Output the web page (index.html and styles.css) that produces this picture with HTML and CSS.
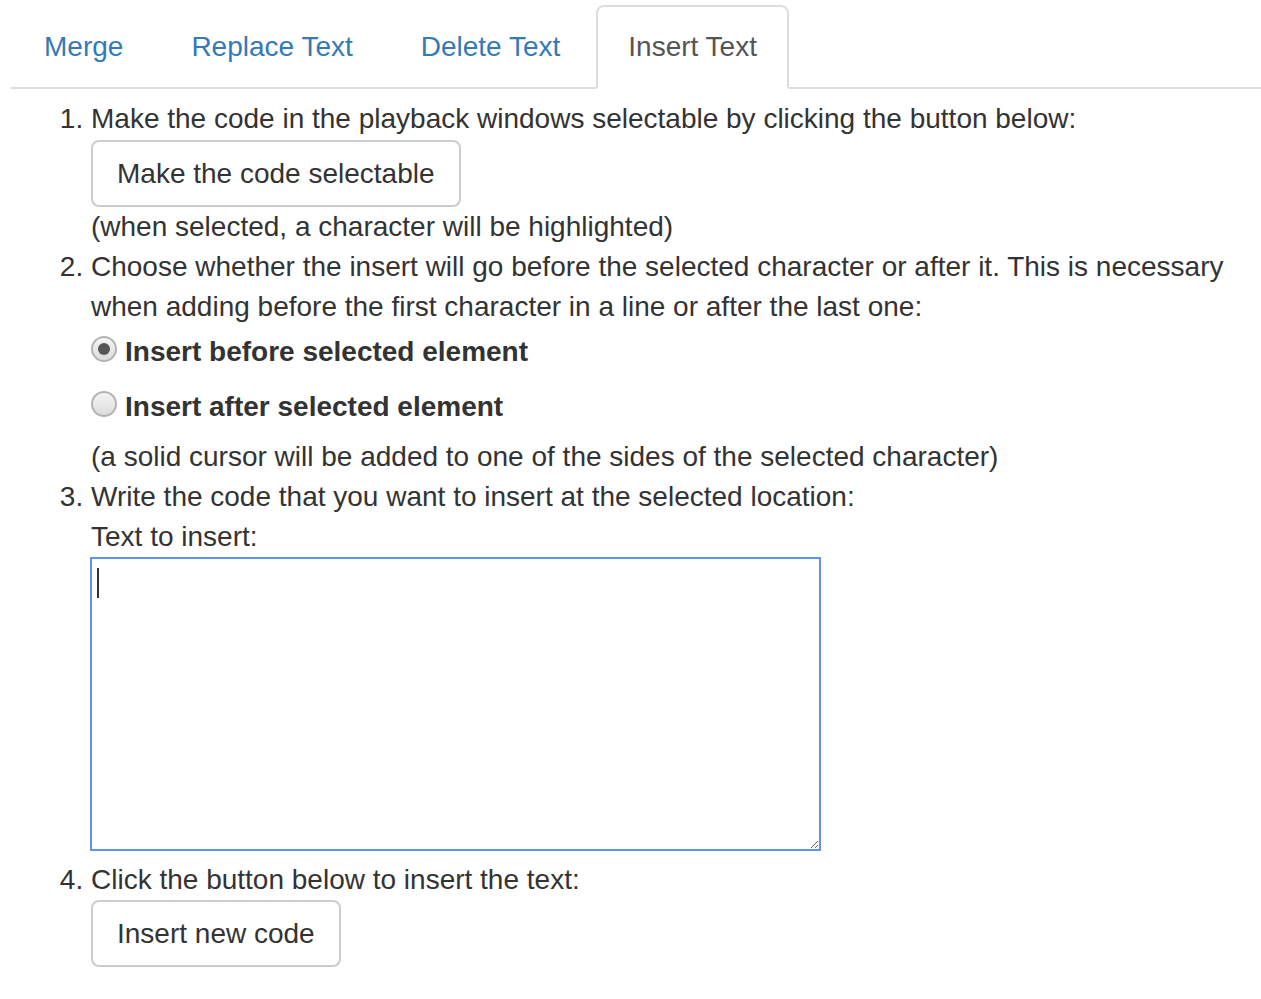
FILE: index.html
```html
<!DOCTYPE html>
<html>
<head>
<meta charset="utf-8">
<link rel="stylesheet" href="styles.css">
</head>
<body>
<div class="page">
  <ul class="tabs">
    <li><a href="#">Merge</a></li>
    <li><a href="#">Replace Text</a></li>
    <li><a href="#">Delete Text</a></li>
    <li class="active"><a href="#">Insert Text</a></li>
  </ul>
  <ol class="steps">
    <li>
      Make the code in the playback windows selectable by clicking the button below:
      <div class="btn-row first"><button class="btn">Make the code selectable</button></div>
      <div>(when selected, a character will be highlighted)</div>
    </li>
    <li>
      Choose whether the insert will go before the selected character or after it. This is necessary when adding before the first character in a line or after the last one:
      <div class="radios">
        <div class="radio"><input type="radio" name="pos" id="before" checked><label for="before">Insert before selected element</label></div>
        <div class="radio"><input type="radio" name="pos" id="after"><label for="after">Insert after selected element</label></div>
      </div>
      <div>(a solid cursor will be added to one of the sides of the selected character)</div>
    </li>
    <li>
      Write the code that you want to insert at the selected location:
      <div>Text to insert:</div>
      <div class="ta-wrap"><textarea class="ta"></textarea><span class="caret"></span></div>
    </li>
    <li>
      Click the button below to insert the text:
      <div class="btn-row second"><button class="btn">Insert new code</button></div>
    </li>
  </ol>
</div>
</body>
</html>
```

FILE: styles.css
```css
html, body {
  margin: 0;
  padding: 0;
  background: #fff;
}
body {
  font-family: "Liberation Sans", Arial, Helvetica, sans-serif;
  font-size: 28px;
  line-height: 40px;
  color: #333;
}
.page {
  padding: 5px 0 0 11px;
}
.tabs {
  list-style: none;
  margin: 0;
  padding: 0 0 0 1px;
  display: flex;
  border-bottom: 2px solid #ddd;
}
.tabs li {
  margin-bottom: -2px;
}
.tabs a {
  display: block;
  padding: 20px 30px;
  margin-right: 4px;
  border: 2px solid transparent;
  border-radius: 8px 8px 0 0;
  color: #337ab7;
  text-decoration: none;
  line-height: 40px;
}
.tabs .active a {
  color: #555;
  background: #fff;
  border-color: #ddd #ddd transparent;
}
.steps {
  margin: 10px 0 0;
  padding-left: 80px;
}
.btn-row.first {
  margin-top: 1px;
}
.btn-row.second {
  margin-top: 0;
}
.btn {
  display: inline-block;
  font-family: inherit;
  font-size: 28px;
  line-height: 40px;
  color: #333;
  background: #fff;
  border: 2px solid #ccc;
  border-radius: 8px;
  padding: 12px 24px 11px;
  margin: 0;
  cursor: pointer;
}
.radios {
  display: flex;
  flex-direction: column;
  gap: 15px;
  padding: 5px 0 10px;
}
.radio {
  display: flex;
  align-items: flex-start;
  height: 40px;
}
.radio input {
  -webkit-appearance: none;
  appearance: none;
  width: 26px;
  height: 26px;
  margin: 4px 8px 0 0;
  border-radius: 50%;
  border: 2px solid #b4b4b4;
  background: linear-gradient(#f4f4f4, #dcdcdc);
  box-sizing: border-box;
  position: relative;
  flex: none;
}
.radio input:checked::after {
  content: "";
  position: absolute;
  left: 5px;
  top: 5px;
  width: 12px;
  height: 12px;
  border-radius: 50%;
  background: #555;
}
.radio label {
  font-weight: bold;
  line-height: 40px;
}
.ta-wrap {
  position: relative;
  width: 731px;
  margin-left: -1px;
  margin-bottom: 9px;
}
.ta {
  display: block;
  box-sizing: border-box;
  width: 731px;
  height: 294px;
  margin: 0;
  border: 2px solid #5f91f0;
  border-radius: 0;
  outline: none;
  font-family: inherit;
  font-size: 28px;
  padding: 4px;
  resize: both;
}
.caret {
  position: absolute;
  left: 7px;
  top: 11px;
  width: 2px;
  height: 30px;
  background: #333;
}
```
